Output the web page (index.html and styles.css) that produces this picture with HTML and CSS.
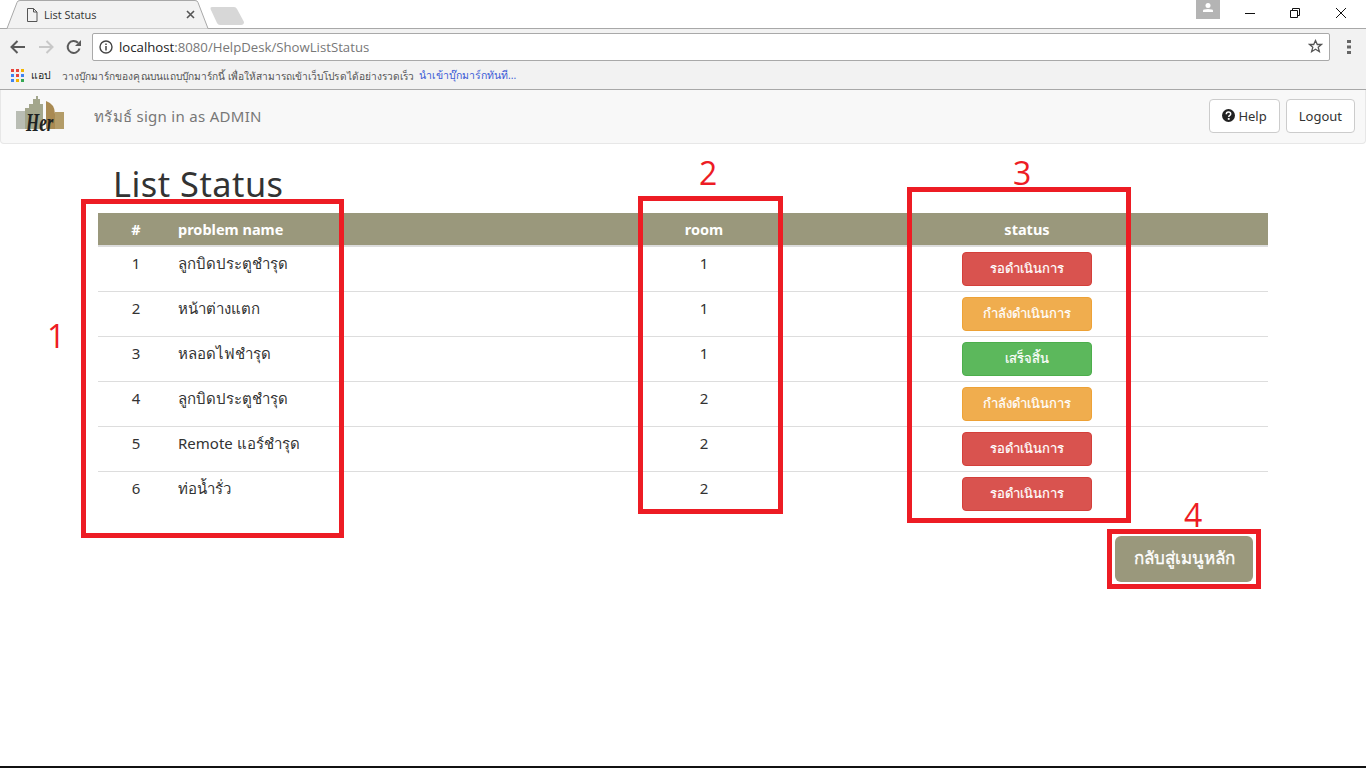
FILE: index.html
```html
<!DOCTYPE html>
<html lang="en">
<head>
    <meta charset="UTF-8">
    <title>List Status</title>
    <link rel="stylesheet" href="styles.css">
</head>
<body>
    <div class="browser">
        <div class="tabstrip">
            <div class="tab">
                <svg class="tab-shape" width="206" height="29" viewBox="0 0 206 29"><path d="M0 28.5h1L11 2.5Q11.5 .5 14 .5H189Q191.500 .5 192 2.500L202 28.500h4" fill="#f2f2f2" stroke="#a8a8a8"/></svg>
                <svg class="tab-icon" width="12" height="14" viewBox="0 0 12 14"><path d="M1.500 .5h6l3.500 3.500v9.500h-9.500zM7.500 .5v3.500h3.500" fill="none" stroke="#555"/></svg>
                <span class="tab-title">List Status</span>
                <svg class="tab-close" width="9" height="9" viewBox="0 0 9 9"><path d="M1 1l7 7M8 1l-7 7" stroke="#555" stroke-width="1.600"/></svg>
            </div>
            <svg class="newtab" width="34" height="18" viewBox="0 0 34 18"><path d="M2 0H24Q26 0 27 2L34 15Q34 18 31 18H10Q8 18 7 16L.5 2Q0 0 2 0z" fill="#d7d7d7"/></svg>
            <div class="window-btns">
                <div class="profile"><svg width="10" height="9" viewBox="0 0 10 9"><circle cx="5" cy="2.500" r="2.500" fill="#fff"/><path d="M0 9V7.500Q0 6 5 6T10 7.500V9z" fill="#fff"/></svg></div>
                <svg class="win-icon" width="10" height="10" viewBox="0 0 10 10"><path d="M0 5.500h10" stroke="#111"/></svg>
                <svg class="win-icon" width="10" height="10" viewBox="0 0 10 10"><path d="M.5 2.500h7v7h-7zM2.500 2.500v-2h7v7h-2" fill="none" stroke="#111"/></svg>
                <svg class="win-icon" width="10" height="10" viewBox="0 0 10 10"><path d="M0 0l10 10M10 0L0 10" stroke="#111"/></svg>
            </div>
        </div>
        <div class="toolbar">
            <svg width="16" height="14" viewBox="0 0 16 14"><path d="M15 7H2M7.500 1L1.500 7l6 6" fill="none" stroke="#5a5a5a" stroke-width="2"/></svg>
            <svg width="16" height="14" viewBox="0 0 16 14"><path d="M1 7h13M8.500 1l6 6-6 6" fill="none" stroke="#c8c8c8" stroke-width="2"/></svg>
            <svg width="16" height="16" viewBox="0 0 16 16"><path d="M13.500 9.500A6 6 0 1 1 12 3.800" fill="none" stroke="#5a5a5a" stroke-width="2"/><path d="M15 1v6H9z" fill="#5a5a5a"/></svg>
            <div class="omnibox">
                <svg width="14" height="14" viewBox="0 0 14 14"><circle cx="7" cy="7" r="6" fill="none" stroke="#444" stroke-width="1.400"/><path d="M7 6v4.500M7 3.500v1.500" stroke="#444" stroke-width="1.500"/></svg>
                <span class="url"><span class="host">localhost</span>:8080/HelpDesk/ShowListStatus</span>
                <svg class="star" width="15" height="15" viewBox="0 0 15 15"><path d="M7.500 1.500l1.800 4h4.200l-3.300 2.800 1.200 4.400-3.900-2.400-3.900 2.400 1.200-4.400L1.500 5.500h4.200z" fill="none" stroke="#555" stroke-width="1.300"/></svg>
            </div>
            <svg class="dots" width="4" height="14" viewBox="0 0 4 14"><path d="M0 0h4v3H0zM0 5.500h4v3H0zM0 11h4v3H0z" fill="#666"/></svg>
        </div>
        <div class="bookmarks">
            <div class="apps">
                <i class="c1"></i><i class="c1"></i><i class="c2"></i>
                <i class="c3"></i><i class="c4"></i><i class="c3"></i>
                <i class="c3"></i><i class="c2"></i><i class="c5"></i>
            </div>
            <span class="apps-label">แอป</span>
            <span class="bm-hint">วางบุ๊กมาร์กของคุณบนแถบบุ๊กมาร์กนี้ เพื่อให้สามารถเข้าเว็บโปรดได้อย่างรวดเร็ว</span>
            <span class="bm-link">นำเข้าบุ๊กมาร์กทันที...</span>
        </div>
    </div>

    <nav class="navbar">
        <svg class="logo" width="52" height="42" viewBox="0 0 52 42">
            <rect x="2" y="15" width="9" height="18" fill="#b9bdb4"/>
            <path d="M11 12h4V8h4V3h3V0h2v3h2v5h3v25H11z" fill="#a3a68c"/>
            <path d="M32 5Q41 8 41 18V33H32z" fill="#a98a52"/>
            <rect x="41" y="16" width="9" height="17" fill="#b39c68"/>
            <text class="logo-text" transform="translate(12 35) scale(.85 1.25)">Her</text>
        </svg>
        <span class="signed-in">ทรัมธ์ sign in as ADMIN</span>
        <div class="nav-btns">
            <a class="nav-btn">
                <svg width="13" height="13" viewBox="0 0 13 13"><circle cx="6.500" cy="6.500" r="6.500" fill="#222"/><path d="M4.300 5.200Q4.300 3 6.500 3T8.700 5Q8.700 6 7.500 6.600 6.800 7 6.800 8" fill="none" stroke="#fff" stroke-width="1.500"/><rect x="5.800" y="9" width="1.800" height="1.800" fill="#fff"/></svg>
                Help
            </a>
            <a class="nav-btn">Logout</a>
        </div>
    </nav>

    <main class="content">
        <h1 class="page-title">List Status</h1>
        <table class="status-table">
            <thead>
                <tr>
                    <th class="col-num">#</th>
                    <th class="col-name">problem name</th>
                    <th class="col-room">room</th>
                    <th class="col-status">status</th>
                </tr>
            </thead>
            <tbody>
                <tr>
                    <td class="col-num">1</td>
                    <td class="col-name">ลูกบิดประตูชำรุด</td>
                    <td class="col-room">1</td>
                    <td class="col-status"><span class="badge red">รอดำเนินการ</span></td>
                </tr>
                <tr>
                    <td class="col-num">2</td>
                    <td class="col-name">หน้าต่างแตก</td>
                    <td class="col-room">1</td>
                    <td class="col-status"><span class="badge orange">กำลังดำเนินการ</span></td>
                </tr>
                <tr>
                    <td class="col-num">3</td>
                    <td class="col-name">หลอดไฟชำรุด</td>
                    <td class="col-room">1</td>
                    <td class="col-status"><span class="badge green">เสร็จสิ้น</span></td>
                </tr>
                <tr>
                    <td class="col-num">4</td>
                    <td class="col-name">ลูกบิดประตูชำรุด</td>
                    <td class="col-room">2</td>
                    <td class="col-status"><span class="badge orange">กำลังดำเนินการ</span></td>
                </tr>
                <tr>
                    <td class="col-num">5</td>
                    <td class="col-name">Remote แอร์ชำรุด</td>
                    <td class="col-room">2</td>
                    <td class="col-status"><span class="badge red">รอดำเนินการ</span></td>
                </tr>
                <tr>
                    <td class="col-num">6</td>
                    <td class="col-name">ท่อน้ำรั่ว</td>
                    <td class="col-room">2</td>
                    <td class="col-status"><span class="badge red">รอดำเนินการ</span></td>
                </tr>
            </tbody>
        </table>
        <div class="back-row">
            <a class="back-btn">กลับสู่เมนูหลัก</a>
        </div>
    </main>
    <div class="bottom-line"></div>

    <!-- red notes drawn over the page -->
    <div class="mark mark-1"></div>
    <div class="mark mark-2"></div>
    <div class="mark mark-3"></div>
    <div class="mark mark-4"></div>
    <span class="mark-num num-1">1</span>
    <span class="mark-num num-2">2</span>
    <span class="mark-num num-3">3</span>
    <span class="mark-num num-4">4</span>
</body>
</html>
```

FILE: styles.css
```css
* {
    box-sizing: border-box;
}
html, body {
    height: 100%;
}
body {
    margin: 0;
    display: flex;
    flex-direction: column;
    height: 768px;
    overflow: hidden;
    background: #fff;
    color: #333;
    font-family: "Noto Sans", "Open Sans", "Noto Sans CJK SC", sans-serif;
    font-size: 15px;
}

/* browser chrome */
.browser {
    font-family: "Open Sans", "Noto Sans", sans-serif;
    background: #f2f2f2;
    border-bottom: 1px solid #a8a8a8;
    height: 90px;
}
.tabstrip {
    display: flex;
    height: 29px;
    background: #fff;
    border-bottom: 1px solid #a8a8a8;
    padding-left: 6px;
}
.tab {
    position: relative;
    width: 204px;
    height: 29px;
    display: flex;
    align-items: center;
    padding: 0 0 0 20px;
    font-size: 11px;
    color: #333;
}
.tab-shape {
    position: absolute;
    left: 0;
    top: 0;
}
.tab-icon, .tab-title, .tab-close {
    position: relative;
}
.tab-title {
    margin-left: 6px;
    width: 141px;
}
.tab-close {
    margin-left: 1px;
}
.newtab {
    margin: 7px 0 0 0;
}
.window-btns {
    margin-left: auto;
    display: flex;
    align-items: flex-start;
    padding-right: 20px;
}
.profile {
    width: 24px;
    height: 19px;
    margin-right: 25px;
    background: #b4b4b4;
    display: flex;
    justify-content: center;
    padding-top: 3px;
}
.win-icon {
    margin: 8px 35px 0 0;
}
.window-btns .win-icon:nth-child(3) {
    margin-right: 36px;
}
.window-btns .win-icon:last-child {
    margin-right: 0;
}
.toolbar {
    height: 33px;
    display: flex;
    align-items: center;
    padding: 2px 15px 0 10px;
    gap: 12px;
}
.omnibox {
    flex: 1;
    height: 28px;
    margin-left: -2px;
    display: flex;
    align-items: center;
    gap: 6px;
    padding: 0 6px;
    background: #fff;
    border: 1px solid #a9a9a9;
    border-radius: 2px;
    font-size: 13.200px;
    color: #777;
}
.host {
    color: #222;
}
.star {
    margin-left: auto;
}
.dots {
    margin-left: 5px;
}
.bookmarks {
    height: 27px;
    display: flex;
    align-items: center;
    padding-left: 11px;
    font-size: 10.500px;
    color: #555;
}
.apps {
    display: grid;
    grid-template-columns: repeat(3, 3px);
    grid-auto-rows: 3px;
    gap: 2px;
}
.apps i {
    display: block;
}
.c1 { background: #e8453c; }
.c2 { background: #f4b400; }
.c3 { background: #3f83f1; }
.c4 { background: #e8453c; }
.c5 { background: #34a853; }
.apps-label {
    margin-left: 7px;
    color: #222;
}
.bm-hint {
    margin-left: 11px;
    font-size: 10.170px;
    letter-spacing: .04px;
}
.bm-link {
    margin-left: 5px;
    color: #3b5bd6;
}

/* navbar */
.navbar {
    height: 54px;
    flex-shrink: 0;
    display: flex;
    align-items: center;
    padding: 0 10px 2px 13px;
    background: #f8f8f8;
    border: 1px solid #e7e7e7;
    border-top: 0;
    border-radius: 0 0 4px 4px;
}
.logo {
    flex-shrink: 0;
    margin-top: 2px;
}
.logo-text {
    font-family: "Liberation Serif", serif;
    font-style: italic;
    font-weight: bold;
    font-size: 20px;
    fill: #1d2222;
}
.signed-in {
    margin-left: 28px;
    margin-top: 2px;
    font-size: 15px;
    color: #777;
    letter-spacing: .3px;
}
.nav-btns {
    margin-left: auto;
    display: flex;
    gap: 6px;
}
.nav-btn {
    height: 34px;
    padding: 0 12px;
    display: flex;
    align-items: center;
    gap: 3px;
    background: #fff;
    border: 1px solid #ccc;
    border-radius: 4px;
    font-size: 13px;
    color: #333;
}

/* page */
.content {
    flex: 1;
    padding: 0 98px;
}
.page-title {
    margin: 18px 0 0 15px;
    height: 51px;
    font-size: 34.300px;
    line-height: 44px;
    font-weight: 400;
    letter-spacing: .5px;
}
.status-table {
    width: 1170px;
    border-collapse: collapse;
    table-layout: fixed;
}
.status-table th {
    height: 33px;
    padding: 0;
    background: #9a987c;
    border-bottom: 2px solid #ddd;
    color: #fff;
    font-size: 14.500px;
    font-weight: 700;
}
.status-table td {
    height: 45px;
    padding: 0 0 11px;
    border-bottom: 1px solid #ddd;
    font-size: 15px;
    text-align: center;
}
.status-table tr:last-child td {
    border-bottom: 0;
}
.status-table td.col-status {
    padding: 0;
}
.col-num {
    width: 76px;
}
.status-table th.col-name {
    width: 448px;
    padding-left: 4px;
    text-align: left;
}
.status-table td.col-name {
    padding: 0 0 9px 4px;
    text-align: left;
}
.col-room {
    width: 164px;
}
.badge {
    display: block;
    width: 130px;
    height: 34px;
    margin: 0 auto;
    border: 1px solid;
    border-radius: 4px;
    color: #fff;
    font-size: 13px;
    font-weight: 500;
    line-height: 31px;
    -webkit-text-stroke: .2px #fff;
}
.red {
    background: #d9534f;
    border-color: #d43f3a;
}
.orange {
    background: #f0ad4e;
    border-color: #eea236;
}
.green {
    background: #5cb85c;
    border-color: #4cae4c;
}
.back-row {
    display: flex;
    justify-content: flex-end;
    width: 1155px;
    margin-top: 20px;
}
.back-btn {
    width: 138px;
    height: 46px;
    background: #9a987c;
    border-radius: 6px;
    color: #fff;
    font-size: 17px;
    font-weight: 500;
    line-height: 44px;
    text-align: center;
    -webkit-text-stroke: .3px #fff;
}
.bottom-line {
    height: 2px;
    flex-shrink: 0;
    background: #111;
}

/* annotations */
.mark {
    position: absolute;
    border: 5px solid #ed1c24;
}
.mark-1 { left: 81px; top: 199px; width: 263px; height: 339px; }
.mark-2 { left: 638px; top: 196px; width: 145px; height: 318px; }
.mark-3 { left: 907px; top: 187px; width: 224px; height: 336px; }
.mark-4 { left: 1107px; top: 529px; width: 154px; height: 60px; }
.mark-num {
    position: absolute;
    font-family: "Open Sans", sans-serif;
    font-weight: 400;
    font-size: 32px;
    line-height: 36px;
    color: #ed1c24;
}
.num-1 { left: 47px; top: 318px; }
.num-2 { left: 699px; top: 155px; }
.num-3 { left: 1013px; top: 155px; }
.num-4 { left: 1184px; top: 497px; }
```
